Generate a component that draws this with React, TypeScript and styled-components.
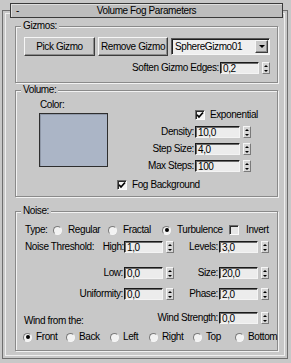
import React from 'react';
import styled, { createGlobalStyle } from 'styled-components';

const GlobalStyle = createGlobalStyle`
  html, body { margin: 0; padding: 0; background: #c8c8c8; }
  body {
    font-family: "Liberation Sans", Arial, sans-serif;
    font-size: 10px;
    letter-spacing: -0.4px;
    color: #000;
  }
`;

const Page = styled.div`
  width: 291px;
  height: 363px;
  overflow: hidden;
  box-sizing: border-box;
  padding-top: 10px;
  background: #c8c8c8;
`;

const Frame = styled.div`
  margin-left: 2px;
  width: 286px;
  height: 349px;
  box-sizing: border-box;
  border: 1px solid #6e6e6e;
  box-shadow: inset 0 0 0 2px #c8c8c8, inset 0 0 0 3px #efefef;
  display: flex;
  flex-direction: column;
`;

const TitleBar = styled.div`
  margin: -8px 4px 0 7px;
  height: 15px;
  box-sizing: border-box;
  border: 1px solid #3a3a3a;
  background: #bdbdbd;
  box-shadow: inset 1px 1px 0 #dedede;
  display: grid;
  grid-template-columns: 1fr auto 1fr;
  align-items: center;
  line-height: 13px;
`;

const Collapse = styled.span`
  padding-left: 5px;
`;

const Group = styled.div<{ $mt: number; $h: number }>`
  margin: ${p => p.$mt}px 9px 0 12px;
  height: ${p => p.$h}px;
  box-sizing: border-box;
  border: 1px solid #8a8a8a;
  box-shadow: inset 1px 1px 0 #f2f2f2, 1px 1px 0 #f2f2f2;
  display: flex;
  flex-direction: column;
`;

const GroupTitle = styled.div`
  align-self: flex-start;
  margin: -7px 0 0 5px;
  padding: 0 2px;
  height: 12px;
  line-height: 12px;
  background: #c8c8c8;
`;

const ButtonRow = styled.div`
  margin-top: 5px;
  padding-left: 8px;
  display: flex;
  align-items: center;
  gap: 3px;
`;

const PushButton = styled.div<{ $w: number }>`
  width: ${p => p.$w}px;
  height: 19px;
  box-sizing: border-box;
  border: 1px solid;
  border-color: #f6f6f6 #3c3c3c #3c3c3c #f6f6f6;
  box-shadow: inset -1px -1px 0 #8c8c8c;
  background: #c8c8c8;
  display: flex;
  align-items: center;
  justify-content: center;
  line-height: 12px;
`;

const Dropdown = styled.div`
  width: 99px;
  height: 17px;
  box-sizing: border-box;
  border: 1px solid;
  border-color: #5a5a5a #f6f6f6 #f6f6f6 #5a5a5a;
  box-shadow: inset 1px 1px 0 #1e1e1e;
  background: #efefef;
  display: flex;
  align-items: center;
  padding: 0 1px 0 3px;
`;

const DropText = styled.span`
  flex: 1;
  line-height: 12px;
`;

const DropButton = styled.div`
  width: 13px;
  height: 13px;
  box-sizing: border-box;
  border: 1px solid;
  border-color: #f6f6f6 #3c3c3c #3c3c3c #f6f6f6;
  box-shadow: inset -1px -1px 0 #8c8c8c;
  background: #c8c8c8;
  display: flex;
  align-items: center;
  justify-content: center;
`;

const Arrow = styled.span<{ $down?: boolean; $size?: number }>`
  width: 0;
  height: 0;
  border-left: ${p => p.$size ?? 2.5}px solid transparent;
  border-right: ${p => p.$size ?? 2.5}px solid transparent;
  ${p =>
    p.$down
      ? `border-top: ${p.$size ?? 2.5}px solid #000;`
      : `border-bottom: ${p.$size ?? 2.5}px solid #000;`}
`;

const RightRow = styled.div<{ $mt: number; $pr: number }>`
  margin-top: ${p => p.$mt}px;
  padding-right: ${p => p.$pr}px;
  display: flex;
  justify-content: flex-end;
  align-items: center;
`;

const Label = styled.span`
  line-height: 12px;
  padding-right: 1px;
  white-space: nowrap;
  text-align: right;
`;

const Field = styled.div<{ $w: number }>`
  width: ${p => p.$w}px;
  height: 12px;
  box-sizing: border-box;
  border: 1px solid;
  border-color: #1a1a1a #f4f4f4 #f4f4f4 #1a1a1a;
  box-shadow: inset 1px 1px 0 #6a6a6a;
  background: #ececec;
  padding-left: 2px;
  line-height: 11px;
  white-space: nowrap;
`;

const Spin = styled.div`
  width: 8px;
  height: 12px;
  margin-left: 3px;
  box-sizing: border-box;
  border: 1px solid;
  border-color: #f6f6f6 #7a7a7a #7a7a7a #f6f6f6;
  background: #d6d6d6;
  display: flex;
  flex-direction: column;
  align-items: center;
  justify-content: space-around;
`;

const SpinField = styled.div`
  display: flex;
  align-items: center;
`;

function Spinner({ value, w }: { value: string; w: number }) {
  return (
    <SpinField>
      <Field $w={w}>{value}</Field>
      <Spin>
        <Arrow />
        <Arrow $down />
      </Spin>
    </SpinField>
  );
}

const VolumeTop = styled.div`
  display: flex;
`;

const ColorCol = styled.div`
  margin: 3px 0 0 23px;
  display: flex;
  flex-direction: column;
`;

const ColorLabel = styled.span`
  line-height: 12px;
  padding-left: 1px;
`;

const Swatch = styled.div`
  margin-top: 2px;
  width: 69px;
  height: 54px;
  box-sizing: border-box;
  border: 1px solid #2e2e2e;
  box-shadow: inset 1px 1px 0 #8f98a8;
  background: #abb5c6;
`;

const ParamCol = styled.div`
  margin: 0 26px 0 auto;
  padding-top: 13px;
  display: flex;
  flex-direction: column;
  align-items: flex-end;
  gap: 5px;
`;

const ParamRow = styled.div`
  display: flex;
  align-items: center;
`;

const Option = styled.div<{ $w?: number; $gap?: number }>`
  ${p => (p.$w ? `width: ${p.$w}px;` : '')}
  flex: none;
  display: flex;
  align-items: center;
  gap: ${p => p.$gap ?? 6}px;
  height: 12px;
  line-height: 12px;
  white-space: nowrap;
`;

const ExpRow = styled(Option)`
  width: 56px;
`;

const FogRow = styled.div`
  margin-top: 7px;
  padding-left: 101px;
  display: flex;
`;

const CheckBox = styled.span<{ $on?: boolean }>`
  width: 10px;
  height: 10px;
  flex: none;
  box-sizing: border-box;
  border: 1px solid;
  border-color: #6a6a6a #fafafa #fafafa #6a6a6a;
  box-shadow: inset 1px 1px 0 #2a2a2a;
  background: ${p => (p.$on ? '#f4f4f4' : '#e6e6e6')};
  display: flex;
  align-items: center;
  justify-content: center;
`;

function Check({ on }: { on?: boolean }) {
  return (
    <CheckBox $on={on}>
      {on && (
        <svg width="8" height="8" viewBox="0 0 8 8">
          <path d="M1 3.8 L3 6 L7 1.5" fill="none" stroke="#000" strokeWidth="1.7" />
        </svg>
      )}
    </CheckBox>
  );
}

const RadioDot = styled.span<{ $on?: boolean }>`
  width: 9px;
  height: 9px;
  flex: none;
  box-sizing: border-box;
  border-radius: 50%;
  border: 1px solid;
  border-color: #7a7a7a #f6f6f6 #f6f6f6 #7a7a7a;
  background: #f2f2f2;
  display: flex;
  align-items: center;
  justify-content: center;
  &::after {
    content: '';
    display: ${p => (p.$on ? 'block' : 'none')};
    width: 4px;
    height: 4px;
    border-radius: 50%;
    background: #000;
  }
`;

const TypeRow = styled.div`
  margin-top: 7px;
  padding-left: 9px;
  display: flex;
  align-items: center;
`;

const TypeLabel = styled.span`
  width: 28px;
  flex: none;
  line-height: 12px;
`;

const NoiseRow = styled.div<{ $mt: number }>`
  margin-top: ${p => p.$mt}px;
  padding-left: 8px;
  display: grid;
  grid-template-columns: 100px 39px 12px 44px 39px 12px;
  grid-template-rows: 12px;
  align-items: center;
`;

const SplitCell = styled.div`
  display: flex;
  justify-content: space-between;
  line-height: 12px;
  padding-left: 1px;
`;

const RightCell = styled.span<{ $col?: string }>`
  ${p => (p.$col ? `grid-column: ${p.$col};` : '')}
  text-align: right;
  padding-right: 1px;
  line-height: 12px;
  white-space: nowrap;
`;

const LeftCell = styled.span<{ $col?: string; $dy?: number }>`
  ${p => (p.$col ? `grid-column: ${p.$col};` : '')}
  line-height: 12px;
  white-space: nowrap;
  margin-top: ${p => (p.$dy ?? 0) * 2}px;
`;

const SpinCell = styled(Spin)`
  margin-left: 3px;
`;

const RadioRow = styled.div`
  margin-top: 7px;
  padding-left: 7px;
  display: flex;
  align-items: center;
`;

function FieldCells({ value }: { value: string }) {
  return (
    <>
      <Field $w={39}>{value}</Field>
      <SpinCell>
        <Arrow />
        <Arrow $down />
      </SpinCell>
    </>
  );
}

export default function App() {
  return (
    <>
      <GlobalStyle />
      <Page>
        <Frame>
          <TitleBar>
            <Collapse>-</Collapse>
            <span>Volume Fog Parameters</span>
            <span />
          </TitleBar>

          <Group $mt={8} $h={57}>
            <GroupTitle>Gizmos:</GroupTitle>
            <ButtonRow>
              <PushButton $w={71}>Pick Gizmo</PushButton>
              <PushButton $w={70}>Remove Gizmo</PushButton>
              <Dropdown>
                <DropText>SphereGizmo01</DropText>
                <DropButton>
                  <Arrow $down $size={3} />
                </DropButton>
              </Dropdown>
            </ButtonRow>
            <RightRow $mt={6} $pr={7}>
              <Label>Soften Gizmo Edges:</Label>
              <Spinner value="0,2" w={39} />
            </RightRow>
          </Group>

          <Group $mt={7} $h={107}>
            <GroupTitle>Volume:</GroupTitle>
            <VolumeTop>
              <ColorCol>
                <ColorLabel>Color:</ColorLabel>
                <Swatch />
              </ColorCol>
              <ParamCol>
                <ExpRow $gap={5}>
                  <Check on />
                  Exponential
                </ExpRow>
                <ParamRow>
                  <Label>Density:</Label>
                  <Spinner value="10,0" w={45} />
                </ParamRow>
                <ParamRow>
                  <Label>Step Size:</Label>
                  <Spinner value="4,0" w={45} />
                </ParamRow>
                <ParamRow>
                  <Label>Max Steps:</Label>
                  <Spinner value="100" w={45} />
                </ParamRow>
              </ParamCol>
            </VolumeTop>
            <FogRow>
              <Option $gap={5}>
                <Check on />
                Fog Background
              </Option>
            </FogRow>
          </Group>

          <Group $mt={14} $h={140}>
            <GroupTitle>Noise:</GroupTitle>
            <TypeRow>
              <TypeLabel>Type:</TypeLabel>
              <Option $w={55}>
                <RadioDot />
                Regular
              </Option>
              <Option $w={54}>
                <RadioDot />
                Fractal
              </Option>
              <Option $w={67}>
                <RadioDot $on />
                Turbulence
              </Option>
              <Option $gap={7}>
                <Check />
                Invert
              </Option>
            </TypeRow>

            <NoiseRow $mt={5}>
              <SplitCell>
                <span>Noise Threshold:</span>
                <span>High:</span>
              </SplitCell>
              <FieldCells value="1,0" />
              <RightCell>Levels:</RightCell>
              <FieldCells value="3,0" />
            </NoiseRow>
            <NoiseRow $mt={14}>
              <RightCell>Low:</RightCell>
              <FieldCells value="0,0" />
              <RightCell>Size:</RightCell>
              <FieldCells value="20,0" />
            </NoiseRow>
            <NoiseRow $mt={9}>
              <RightCell>Uniformity:</RightCell>
              <FieldCells value="0,0" />
              <RightCell>Phase:</RightCell>
              <FieldCells value="2,0" />
            </NoiseRow>
            <NoiseRow $mt={12}>
              <LeftCell $dy={3}>Wind from the:</LeftCell>
              <RightCell $col="2 / 5">Wind Strength:</RightCell>
              <FieldCells value="0,0" />
            </NoiseRow>

            <RadioRow>
              <Option $w={43} $gap={4}>
                <RadioDot $on />
                Front
              </Option>
              <Option $w={44} $gap={4}>
                <RadioDot />
                Back
              </Option>
              <Option $w={39} $gap={4}>
                <RadioDot />
                Left
              </Option>
              <Option $w={44} $gap={4}>
                <RadioDot />
                Right
              </Option>
              <Option $w={42} $gap={4}>
                <RadioDot />
                Top
              </Option>
              <Option $gap={4}>
                <RadioDot />
                Bottom
              </Option>
            </RadioRow>
          </Group>
        </Frame>
      </Page>
    </>
  );
}
